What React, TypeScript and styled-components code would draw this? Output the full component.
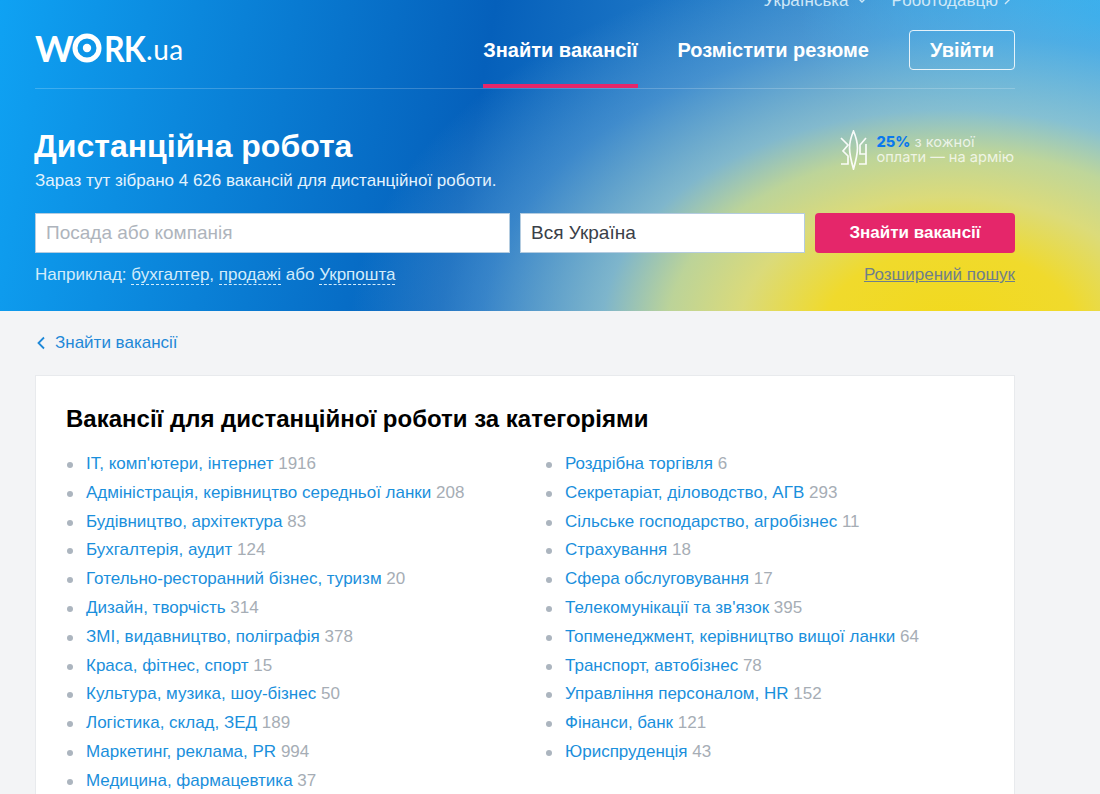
import React from 'react'
import styled, { createGlobalStyle } from 'styled-components'

const leftColumn: [string, number][] = [
  ["IT, комп'ютери, інтернет", 1916],
  ['Адміністрація, керівництво середньої ланки', 208],
  ['Будівництво, архітектура', 83],
  ['Бухгалтерія, аудит', 124],
  ['Готельно-ресторанний бізнес, туризм', 20],
  ['Дизайн, творчість', 314],
  ['ЗМІ, видавництво, поліграфія', 378],
  ['Краса, фітнес, спорт', 15],
  ['Культура, музика, шоу-бізнес', 50],
  ['Логістика, склад, ЗЕД', 189],
  ['Маркетинг, реклама, PR', 994],
  ['Медицина, фармацевтика', 37],
]

const rightColumn: [string, number][] = [
  ['Роздрібна торгівля', 6],
  ['Секретаріат, діловодство, АГВ', 293],
  ['Сільське господарство, агробізнес', 11],
  ['Страхування', 18],
  ['Сфера обслуговування', 17],
  ["Телекомунікації та зв'язок", 395],
  ['Топменеджмент, керівництво вищої ланки', 64],
  ['Транспорт, автобізнес', 78],
  ['Управління персоналом, HR', 152],
  ['Фінанси, банк', 121],
  ['Юриспруденція', 43],
]

const App = () => {
  return (
    <>
      <GlobalStyle />
      <Hero>
        <HeroInner>
          <TopLinks>
            <TopLink>
              Українська
              <svg width="8" height="5" viewBox="0 0 8 5" fill="none" stroke="currentColor" strokeWidth="1.4">
                <path d="M.5.5L4 4 7.500.5" />
              </svg>
            </TopLink>
            <TopLink $tight>
              Роботодавцю
              <svg width="6" height="10" viewBox="0 0 6 10" fill="none" stroke="currentColor" strokeWidth="1.4">
                <path d="M1 1l4 4-4 4" />
              </svg>
            </TopLink>
          </TopLinks>
          <NavBar>
            <Logo>
              <span>W</span>
              <svg width="30" height="30" viewBox="0 0 30 30">
                <circle cx="15" cy="15" r="12" fill="none" stroke="#fff" strokeWidth="5" />
                <circle cx="15" cy="15" r="4.2" fill="#fff" />
              </svg>
              <LogoRest>RK</LogoRest>
              <LogoTail>.ua</LogoTail>
            </Logo>
            <NavLinks>
              <NavItem $active>Знайти вакансії</NavItem>
              <NavItem>Розмістити резюме</NavItem>
              <LoginButton>Увійти</LoginButton>
            </NavLinks>
          </NavBar>
          <TitleRow>
            <div>
              <Title>Дистанційна робота</Title>
              <Subtitle>Зараз тут зібрано 4 626 вакансій для дистанційної роботи.</Subtitle>
            </div>
            <ArmyNote>
              <svg width="27" height="40" viewBox="0 0 27 40" fill="none" stroke="#fff" strokeWidth="1.7" opacity="0.92">
                <path d="M13.500 1C11 7 9.500 12 9.500 18c0 7 2 14 4 21 2-7 4-14 4-21 0-6-1.500-11-4-17z" />
                <path d="M1 8l7 7-5 6 5 5v8H1" />
                <path d="M26 8l-6 7v9h6M26 14v20h-7" />
              </svg>
              <ArmyText>
                <ArmyPercent>25%</ArmyPercent> з кожної
                <br />
                оплати — на армію
              </ArmyText>
            </ArmyNote>
          </TitleRow>
          <SearchRow>
            <SearchInput $grow placeholder="Посада або компанія" readOnly />
            <SearchInput defaultValue="Вся Україна" readOnly />
            <SearchButton>Знайти вакансії</SearchButton>
          </SearchRow>
          <HintRow>
            <Hints>
              Наприклад: <HintLink>бухгалтер</HintLink>, <HintLink>продажі</HintLink> або{' '}
              <HintLink>Укрпошта</HintLink>
            </Hints>
            <AdvancedLink>Розширений пошук</AdvancedLink>
          </HintRow>
        </HeroInner>
      </Hero>
      <Main>
        <BackLink>
          <svg width="10" height="14" viewBox="0 0 10 14" fill="none" stroke="currentColor" strokeWidth="1.8">
            <path d="M8 1.500L2.500 7 8 12.500" />
          </svg>
          Знайти вакансії
        </BackLink>
        <Card>
          <CardTitle>Вакансії для дистанційної роботи за категоріями</CardTitle>
          <Columns>
            {[leftColumn, rightColumn].map((column, i) => (
              <CategoryList key={i}>
                {column.map(([name, count]) => (
                  <CategoryItem key={name}>
                    <CategoryLink>{name}</CategoryLink> <Count>{count}</Count>
                  </CategoryItem>
                ))}
              </CategoryList>
            ))}
          </Columns>
        </Card>
      </Main>
    </>
  )
}

export default App

const GlobalStyle = createGlobalStyle`
  html, body {
    margin: 0;
    height: 794px;
    overflow: hidden;
    background: #f3f4f6;
    font-family: "Liberation Sans", Arial, sans-serif;
    font-size: 17px;
  }
  * {
    box-sizing: border-box;
  }
`

const Hero = styled.header`
  height: 311px;
  overflow: hidden;
  background:
    radial-gradient(ellipse 600px 380px at 950px 330px, #f2d91c 0%, #f0da2c 21%, rgba(222, 220, 120, 0.98) 35%, rgba(196, 216, 150, 0.95) 47%, rgba(150, 197, 205, 0.8) 58%, rgba(110, 170, 215, 0.45) 78%, rgba(100, 165, 215, 0) 100%),
    radial-gradient(ellipse 300px 170px at 1100px 20px, #2cb1f3 0%, rgba(44, 177, 243, 0.5) 60%, rgba(44, 177, 243, 0) 100%),
    linear-gradient(100deg, #0fa2f3 0%, #0560bb 43%, #62b4e2 100%);
`

const HeroInner = styled.div`
  width: 980px;
  margin-left: 35px;
`

const TopLinks = styled.div`
  display: flex;
  justify-content: flex-end;
  gap: 26px;
  height: 16px;
  margin-top: -7px;
  margin-bottom: -1px;
  padding-right: 5px;
  font-size: 17px;
  line-height: 16px;
  color: #cfe8f8;
`

const TopLink = styled.a<{ $tight?: boolean }>`
  display: inline-flex;
  align-items: center;
  gap: ${props => (props.$tight ? '6px' : '9px')};

  svg {
    margin-top: -2px;
  }
`

const NavBar = styled.div`
  display: flex;
  align-items: flex-start;
  justify-content: space-between;
  height: 81px;
  border-bottom: 1px solid rgba(255, 255, 255, 0.2);
`

const Logo = styled.div`
  display: flex;
  align-items: center;
  height: 30px;
  margin-top: 25px;
  color: #fff;
  font-family: Lato, sans-serif;
  font-weight: 700;
  font-size: 37px;
  line-height: 30px;

  svg {
    margin: 0 0 0 -2px;
  }
`

const LogoRest = styled.span`
  display: inline-block;
  margin-left: 2px;
  margin-right: -6px;
  letter-spacing: -1px;
  transform: scaleX(0.87);
  transform-origin: left center;
`

const LogoTail = styled.span`
  font-weight: 400;
  font-size: 28px;
  margin-top: 2px;
  margin-left: 1px;
  letter-spacing: 0.5px;
`

const NavLinks = styled.nav`
  display: flex;
  align-items: flex-start;
  height: 80px;
`

const NavItem = styled.a<{ $active?: boolean }>`
  height: 80px;
  margin-right: 40px;
  padding-top: 30px;
  font-size: 20px;
  font-weight: 700;
  line-height: 24px;
  color: #fff;
  border-bottom: 4px solid ${props => (props.$active ? '#e5266a' : 'transparent')};
`

const LoginButton = styled.a`
  width: 106px;
  height: 40px;
  margin-top: 22px;
  border: 1px solid rgba(255, 255, 255, 0.85);
  border-radius: 4px;
  text-align: center;
  font-size: 20px;
  font-weight: 700;
  line-height: 38px;
  color: #fff;
`

const TitleRow = styled.div`
  display: flex;
  justify-content: space-between;
  align-items: flex-start;
  height: 124px;
  padding-top: 38px;
`

const Title = styled.h1`
  margin: 0 0 0 -1px;
  font-size: 32px;
  font-weight: 700;
  line-height: 38px;
  color: #fff;
`

const Subtitle = styled.p`
  margin: 6px 0 0;
  font-size: 17px;
  line-height: 20px;
  color: #e4f3fd;
`

const ArmyNote = styled.div`
  display: flex;
  align-items: center;
  gap: 9px;
  margin: 3px 1px 0 0;
`

const ArmyText = styled.div`
  font-family: Inter, sans-serif;
  font-size: 14.6px;
  line-height: 15px;
  color: rgba(255, 255, 255, 0.75);
`

const ArmyPercent = styled.b`
  font-weight: 800;
  color: #0a78ee;
`

const SearchRow = styled.div`
  display: flex;
  gap: 10px;
`

const SearchInput = styled.input<{ $grow?: boolean }>`
  height: 40px;
  width: ${props => (props.$grow ? '475px' : '285px')};
  padding: 0 10px;
  border: 1px solid #b4cce0;
  border-radius: 0;
  outline: none;
  background: #fff;
  font-family: "Liberation Sans", Arial, sans-serif;
  font-size: 19px;
  color: #3a4048;

  &::placeholder {
    color: #aeb4bc;
    opacity: 1;
  }
`

const SearchButton = styled.button`
  width: 200px;
  height: 40px;
  border: 0;
  border-radius: 4px;
  background: #e5266a;
  color: #fff;
  font-family: "Liberation Sans", Arial, sans-serif;
  font-size: 17px;
  font-weight: 700;
`

const HintRow = styled.div`
  display: flex;
  justify-content: space-between;
  margin-top: 12px;
  font-size: 17px;
  line-height: 20px;
`

const Hints = styled.div`
  color: #d2ecfb;
`

const HintLink = styled.a`
  border-bottom: 1px dashed #d2ecfb;
`

const AdvancedLink = styled.a`
  color: #6f7f8a;
  text-decoration: underline;
`

const Main = styled.main`
  width: 980px;
  margin-left: 35px;
  padding-top: 22px;
`

const BackLink = styled.a`
  display: flex;
  align-items: center;
  gap: 9px;
  height: 20px;
  padding-left: 1px;
  font-size: 17px;
  line-height: 20px;
  color: #1e88d8;
`

const Card = styled.section`
  margin-top: 22px;
  padding: 29px 30px 40px;
  background: #fff;
  border: 1px solid #e8eaed;
`

const CardTitle = styled.h2`
  margin: 0;
  font-size: 24px;
  font-weight: 700;
  line-height: 28px;
  color: #000;
`

const Columns = styled.div`
  display: grid;
  grid-template-columns: 479px 1fr;
  margin-top: 17px;
`

const CategoryList = styled.ul`
  margin: 0;
  padding: 0;
  list-style: none;
`

const CategoryItem = styled.li`
  position: relative;
  padding-left: 20px;
  font-size: 17px;
  line-height: 28.8px;
  white-space: nowrap;

  &::before {
    content: '';
    position: absolute;
    left: 1px;
    top: 12px;
    width: 6px;
    height: 6px;
    border-radius: 50%;
    background: #acb5bf;
  }
`

const CategoryLink = styled.a`
  color: #1a8fdc;
`

const Count = styled.span`
  color: #a6adb5;
`
